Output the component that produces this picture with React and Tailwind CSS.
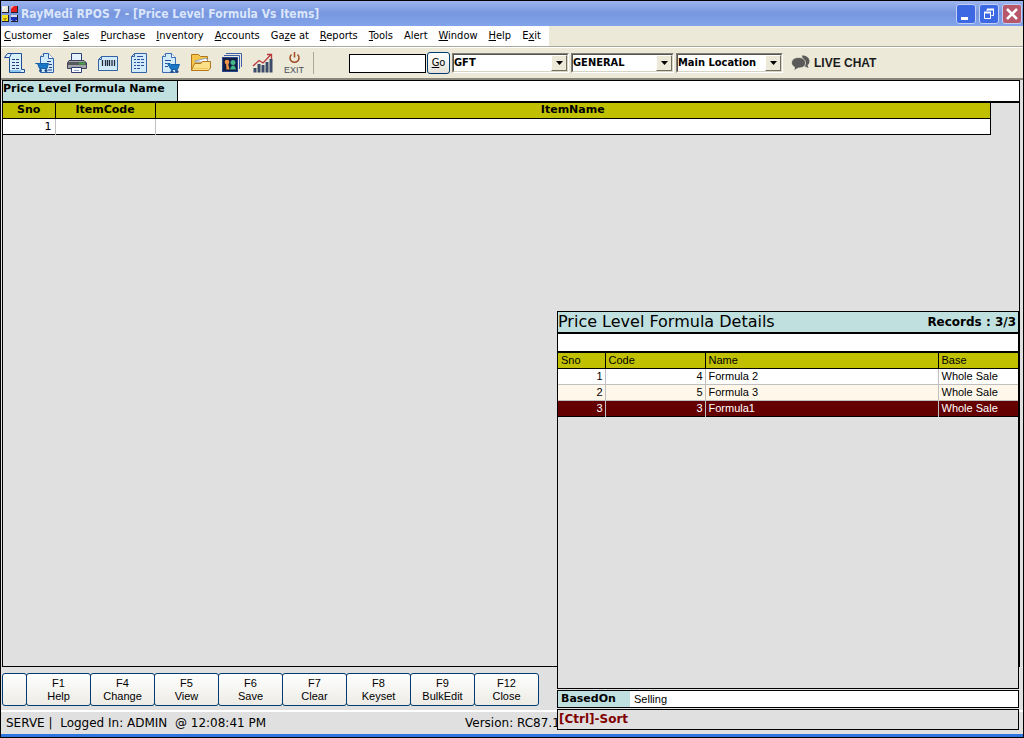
import React, { useState } from 'react';

const menus = [
  ['', 'C', 'ustomer'],
  ['', 'S', 'ales'],
  ['', 'P', 'urchase'],
  ['', 'I', 'nventory'],
  ['', 'A', 'ccounts'],
  ['Ga', 'z', 'e at'],
  ['', 'R', 'eports'],
  ['', 'T', 'ools'],
  ['Alert', '', ''],
  ['', 'W', 'indow'],
  ['', 'H', 'elp'],
  ['E', 'x', 'it'],
];

const keys = [
  ['F1', 'Help'],
  ['F4', 'Change'],
  ['F5', 'View'],
  ['F6', 'Save'],
  ['F7', 'Clear'],
  ['F8', 'Keyset'],
  ['F9', 'BulkEdit'],
  ['F12', 'Close'],
];

const formulas = [
  { code: 4, name: 'Formula 2', base: 'Whole Sale' },
  { code: 5, name: 'Formula 3', base: 'Whole Sale' },
  { code: 3, name: 'Formula1', base: 'Whole Sale' },
];

const Icon = ({ children }) => (
  <svg width="22" height="22" viewBox="0 0 22 22" fill="none" strokeWidth="1">
    {children}
  </svg>
);

const ScrollIcon = () => (
  <Icon>
    <path d="M5.5 5.5V20.5H20.5V17.5H17.5V1.5H3.5L0.5 5.5H5.5" fill="#d8effc" stroke="#1f4a94" />
    <path d="M5.5 5.500L7.500 1.500" stroke="#1f4a94" />
    <path d="M6 18H17V20H6Z" fill="#8cc8f0" />
    <path d="M8 7.5h3M12 7.5h3M8 10.5h3M12 10.5h3M8 13.5h3M12 13.5h3M8 16.5h3M12 16.5h3" stroke="#2b3f7c" />
  </Icon>
);

const CartDocIcon = () => (
  <Icon>
    <path d="M5.5 4.5L8.5 1.5H13.5L18.5 6.5V20.5H5.5Z" fill="#cfeafb" stroke="#2f62ad" />
    <path d="M13.5 1.5V6.5H18.5M8.5 1.5V4.5H5.5" fill="#fff" stroke="#2f62ad" />
    <path d="M12 9.5h4M14 12.5h3M14 15.5h3M13 18h4" stroke="#2b3f7c" />
    <path d="M0.5 11.5H2.5L4.5 16.500H12L13.5 11.5Z" fill="#1877c4" stroke="#1560a8" />
    <circle cx="5.500" cy="18.5" r="1.5" fill="#174a8c" />
    <circle cx="11" cy="18.5" r="1.5" fill="#174a8c" />
  </Icon>
);

const PrinterIcon = () => (
  <Icon>
    <path d="M5.5 8V1.5H15.5V8" fill="#e4f0fb" stroke="#2d3e78" />
    <path d="M3 8.5H18L20.5 11V16.5H1.5V11Z" fill="#a2a4a8" stroke="#3c4058" />
    <path d="M2 11.500h18" stroke="#55585e" strokeWidth="3" />
    <path d="M13 11.500h6" stroke="#43a24a" strokeWidth="2" />
    <path d="M5.5 15.5H15.5V20.5H5.5Z" fill="#fff" stroke="#2d3e78" />
    <path d="M8 18.5h5" stroke="#8ea3c7" />
  </Icon>
);

const BarcodeIcon = () => (
  <Icon>
    <path d="M1.5 7.5L4.5 4.5H20.5V18.5H1.5Z" fill="#d2ebfa" stroke="#3663a5" />
    <path d="M1.5 7.5H4.5V4.5" stroke="#3663a5" />
    <path d="M5.5 8v6M8.5 8v6M10.5 8v6M12.5 8v6M15 8v6M17.5 8v6" stroke="#222a3c" strokeWidth="1.3" />
  </Icon>
);

const ListIcon = () => (
  <Icon>
    <path d="M3.5 4.5L6.5 1.5H18.5V20.5H3.5Z" fill="#d2ebfa" stroke="#3663a5" />
    <path d="M3.5 4.5H6.5V1.5" stroke="#3663a5" />
    <path d="M6 7.5h2M9 7.5h3M13 7.5h3M6 10.5h2M9 10.5h3M13 10.5h3M6 13.5h2M9 13.5h3M13 13.5h3M6 16.5h2M9 16.5h3M9 4.5h6" stroke="#2b4f9c" />
  </Icon>
);

const DocCartIcon = () => (
  <Icon>
    <path d="M3.5 4.5L6.5 1.5H12.5L16.5 5.5V20.5H3.5Z" fill="#d2ebfa" stroke="#3a6bb5" />
    <path d="M12.5 1.5V5.5H16.5M3.5 4.5H6.5V1.5" fill="#fff" stroke="#3a6bb5" />
    <path d="M6 8.5h6M6 11.5h2M6 14.5h3" stroke="#2b4f9c" />
    <path d="M8.5 11.500H11L12 12.500H20.5L18.500 17.5H12Z" fill="#1877c4" stroke="#1560a8" />
    <circle cx="13" cy="19.5" r="1.5" fill="#174a8c" />
    <circle cx="18" cy="19.5" r="1.5" fill="#174a8c" />
  </Icon>
);

const FolderIcon = () => (
  <Icon>
    <path d="M1.5 18.5V2.5H8.5L10.5 4.5H17.5V9" fill="#f6c64c" stroke="#b3771a" />
    <path d="M5 9L16.500 6L18 10H5Z" fill="#fff" stroke="#8d9cb5" />
    <path d="M1.5 18.5L4.5 11.5H11L12.5 9.500H20.5V16L18.5 18.5Z" fill="#fbe08a" stroke="#b3771a" />
    <path d="M4 16.5h14" stroke="#f3c659" />
  </Icon>
);

const UsersIcon = () => (
  <Icon>
    <path d="M5 1.5H20.5V15" stroke="#3c5fa8" />
    <path d="M3 3.5H18.5V17" stroke="#3c5fa8" />
    <rect x="1.5" y="5.5" width="15" height="14" fill="#131c44" stroke="#27468e" />
    <circle cx="6" cy="10" r="2.3" fill="#f0954a" />
    <path d="M5 11H7L8.500 17.500H5.500Z" fill="#f0954a" />
    <circle cx="12" cy="10.500" r="2.500" fill="#43b789" />
    <path d="M9 17.5C9.500 15 10.5 14 12 13.500S14.500 15 15 17.5Z" fill="#43b789" />
  </Icon>
);

const ChartIcon = () => (
  <Icon>
    <path d="M3 20.5V16M7 20.5V12M11 20.5V13M15 20.5V10M19 20.5V7" stroke="#3b4c6b" strokeWidth="3" />
    <path d="M1 14L7 8.5L11 11L19 2.5M15 2.5H19.5V7" stroke="#b8393b" strokeWidth="1.3" />
  </Icon>
);

const ExitIcon = () => (
  <svg width="22" height="22" viewBox="0 0 22 22" fill="none">
    <path d="M8.500 2.500A4.500 4.500 0 1 0 14.500 2.500" stroke="#a04a22" strokeWidth="1.500" />
    <path d="M11.500 0V5.500" stroke="#a04a22" strokeWidth="1.500" />
    <text x="1" y="21" fontSize="9" fill="#4a4f58" fontFamily="Liberation Sans, sans-serif">
      EXIT
    </text>
  </svg>
);

const tools = [
  ['Bill', ScrollIcon],
  ['Sales', CartDocIcon],
  ['Print', PrinterIcon],
  ['Barcode', BarcodeIcon],
  ['List', ListIcon],
  ['Purchase', DocCartIcon],
  ['Open', FolderIcon],
  ['Users', UsersIcon],
  ['Chart', ChartIcon],
  ['Exit', ExitIcon],
];

const Logo = () => (
  <svg width="17" height="17" viewBox="0 0 17 17">
    <path d="M1 1h7v7H1ZM10 1h7v7h-7ZM1 10h7v7H1ZM10 10h7v7h-7Z" fill="#22202c" />
    <path d="M1 1h6v6H1Z" fill="#e9e6da" />
    <path d="M2 5L5 2H2Z" fill="#fff" />
    <path d="M10 1h6v6h-6Z" fill="#e22020" />
    <path d="M10 4l3-3h-3Z" fill="#f6a6a0" />
    <path d="M1 10h6v6H1Z" fill="#f2e020" />
    <path d="M2 13h4l-2 3Z" fill="#a88a00" />
    <path d="M10 10h6v6h-6Z" fill="#dcdcdc" />
    <path d="M10 12h6v3l-2 1h-2l-2-1Z" fill="#1a34b4" />
  </svg>
);

const WindowButton = ({ label, className, children }) => (
  <button aria-label={label} className={`flex h-5 w-5 items-center justify-center rounded-[3px] border border-[#c3d0f5] ${className}`}>
    <svg width="18" height="18" viewBox="0 0 18 18" fill="none" stroke="#fff">
      {children}
    </svg>
  </button>
);

const Combo = ({ label, value, className }) => (
  <div className={`relative h-5 border border-white border-t-[#848278] border-l-[#848278] bg-white ${className}`}>
    <select
      aria-label={label}
      className="h-full w-full appearance-none border border-[#d8d4c4] border-t-[#55534b] border-l-[#55534b] bg-white font-['DejaVu_Sans_Condensed','DejaVu_Sans',sans-serif] text-[11px] leading-4 font-bold outline-none"
    >
      <option>{value}</option>
    </select>
    <span className="pointer-events-none absolute top-px right-px bottom-px flex w-4 items-center justify-center border border-white border-r-[#716f64] border-b-[#716f64] bg-[#ece9d8]">
      <svg width="7" height="4" viewBox="0 0 7 4">
        <path d="M0 0H7L3.5 4Z" fill="#000" />
      </svg>
    </span>
  </div>
);

const FormulaDetails = () => {
  const [selected, setSelected] = useState(2);
  const [search, setSearch] = useState('');

  return (
    <section className="absolute top-[310px] right-1 bottom-[7px] flex w-[462px] flex-col font-['Liberation_Sans',sans-serif] text-[11px]">
      <div className="flex flex-1 flex-col border border-black bg-[#e0e0e0]">
        <div className="flex h-[22px] items-center justify-between border-b-2 border-black bg-[#c0e0df] pr-0.5 font-['DejaVu_Sans',sans-serif]">
          <h2 className="text-[16px] leading-5">Price Level Formula Details</h2>
          <span className="text-[12px] leading-5 font-bold">Records : 3/3</span>
        </div>
        <input
          aria-label="Search formula"
          value={search}
          onChange={(e) => setSearch(e.target.value)}
          className="h-[19px] border-b-2 border-black bg-white px-1 outline-none"
        />
        <table className="w-full table-fixed border-collapse leading-[15px]">
          <colgroup>
            <col className="w-[47px]" />
            <col className="w-[100px]" />
            <col />
            <col className="w-[80px]" />
          </colgroup>
          <thead>
            <tr className="h-[15px] border-b border-black bg-[#c0c000] text-left leading-[14px]">
              <th className="border-r border-black px-[3px] py-0 font-normal">Sno</th>
              <th className="border-r border-black px-[3px] py-0 font-normal">Code</th>
              <th className="border-r border-black px-[3px] py-0 font-normal">Name</th>
              <th className="px-[3px] py-0 font-normal">Base</th>
            </tr>
          </thead>
          <tbody>
            {formulas.map((item, i) => (
              <tr
                key={item.code}
                onClick={() => setSelected(i)}
                className={`h-4 border-b ${i === formulas.length - 1 ? 'border-black' : 'border-[#c0c0c0]'} ${
                  i === selected ? 'bg-[#640000] text-white' : i % 2 ? 'bg-[#fff8ea]' : 'bg-white'
                }`}
              >
                <td className="border-r border-r-[#c0c0c0] px-0.5 py-0 text-right">{i + 1}</td>
                <td className="border-r border-r-[#c0c0c0] px-0.5 py-0 text-right">{item.code}</td>
                <td className="border-r border-r-[#c0c0c0] px-[3px] py-0">{item.name}</td>
                <td className="px-[3px] py-0">{item.base}</td>
              </tr>
            ))}
          </tbody>
        </table>
      </div>
      <div className="bg-[#e0e0e0] py-px">
        <dl className="flex h-[18px] items-stretch border border-black bg-white leading-4">
          <dt className="w-[72px] bg-[#c0e0df] pl-[3px] font-['DejaVu_Sans',sans-serif] font-bold">BasedOn</dt>
          <dd className="pl-1">Selling</dd>
        </dl>
      </div>
      <div className="h-[21px] border border-black bg-[#e0e0e0] pl-px font-['DejaVu_Sans',sans-serif] text-[12px] leading-[18px] font-bold text-[#800000]">
        [Ctrl]-Sort
      </div>
    </section>
  );
};

const App = () => {
  return (
    <div className="relative flex h-screen flex-col border border-black bg-[#e0e0e0] font-['DejaVu_Sans',sans-serif] text-[11px] text-black">
      <header className="flex h-[25px] shrink-0 items-center gap-[3px] bg-linear-to-b from-[#9db5f0] via-[#7796de] to-[#82a4ea] pr-px">
        <Logo />
        <h1 className="flex-1 font-['DejaVu_Sans_Condensed','DejaVu_Sans',sans-serif] text-[12px] font-bold text-[#dbe6fb]">
          RayMedi RPOS 7 - [Price Level Formula Vs Items]
        </h1>
        <div className="flex gap-[3px]">
          <WindowButton label="Minimize" className="bg-[#3d68e4]">
            <path d="M4 13.5h7" strokeWidth="3" />
          </WindowButton>
          <WindowButton label="Restore" className="bg-[#3d68e4]">
            <path d="M7 6V4.5H13.5V10.5H11.5M4.5 7.5H10.5V13.5H4.5Z" />
            <path d="M4 7.5H11M7 4.5h7" strokeWidth="2" />
          </WindowButton>
          <WindowButton label="Close" className="bg-[#b7586a]">
            <path d="M4 4L14 14M14 4L4 14" strokeWidth="2.500" />
          </WindowButton>
        </div>
      </header>

      <nav className="flex h-[21px] shrink-0 border-b border-[#aca899] bg-[#ece9d8]">
        <div className="flex items-center gap-[11px] bg-white pr-2 pl-[3px] font-['DejaVu_Sans_Condensed','DejaVu_Sans',sans-serif]">
          {menus.map(([before, hot, after]) => (
            <button key={before + hot + after} className="leading-[18px]">
              {before}
              <span className="underline">{hot}</span>
              {after}
            </button>
          ))}
        </div>
      </nav>

      <div className="flex h-[33px] shrink-0 items-center border-t border-b-2 border-t-white border-b-[#8a887c] bg-[#ece9d8]">
        <div className="flex items-center gap-[9px] border-r border-[#aca899] pr-2 pl-[3px]">
          {tools.map(([label, Glyph]) => (
            <button key={label} aria-label={label} className="h-[22px] w-[22px]">
              <Glyph />
            </button>
          ))}
        </div>
        <div className="flex items-center gap-0.5 pl-[35px]">
          <div className="flex items-center gap-px">
            <input aria-label="Search" className="h-[19px] w-[77px] border border-black bg-white px-1 outline-none" />
            <button className="h-[22px] w-[23px] rounded-[3px] border border-[#003c74] bg-linear-to-b from-white to-[#e4e2d8] font-['DejaVu_Sans_Condensed','DejaVu_Sans',sans-serif]">
              <span className="underline">G</span>o
            </button>
          </div>
          <Combo label="Company" value="GFT" className="w-[117px]" />
          <Combo label="Division" value="GENERAL" className="w-[103px]" />
          <Combo label="Location" value="Main Location" className="w-[107px]" />
          <a href="#chat" className="flex items-center gap-1 pl-1.5 font-['Liberation_Sans',sans-serif] text-[12px] font-bold text-[#1c1c1c]">
            <svg width="19" height="16" viewBox="0 0 19 16">
              <path d="M11 0.5C15 0.5 18.500 2.500 18.500 6C18.500 8 17.500 9.500 16.500 10L17.500 13L13 11Z" fill="#5a5a58" />
              <path
                d="M7.500 2.500C11.500 2.500 14.500 4.500 14.500 8S11.500 13 7.500 13L3 15.500L3.500 12C1.500 11 0.500 9.500 0.500 8C0.500 4.500 3.500 2.500 7.500 2.500Z"
                fill="#5a5a58"
                stroke="#ece9d8"
                strokeWidth="0.8"
              />
            </svg>
            LIVE CHAT
          </a>
        </div>
      </div>

      <main className="mr-[3px] ml-px flex flex-1 flex-col border border-black bg-[#e0e0e0]">
        <div className="flex h-[22px] border-b-2 border-black bg-white">
          <label htmlFor="formula-name" className="w-[175px] border-r border-black bg-[#c0e0df] leading-4 font-bold whitespace-nowrap">
            Price Level Formula Name
          </label>
          <input id="formula-name" className="flex-1 bg-white px-1 outline-none" />
        </div>
        <div className="pr-7">
          <table className="w-full table-fixed border-collapse leading-[15px]">
            <colgroup>
              <col className="w-[52px]" />
              <col className="w-[100px]" />
              <col />
            </colgroup>
            <thead>
              <tr className="h-[15px] border-r border-b border-black bg-[#c0c000] leading-[14px]">
                <th className="border-r border-black p-0">Sno</th>
                <th className="border-r border-black p-0">ItemCode</th>
                <th className="p-0">ItemName</th>
              </tr>
            </thead>
            <tbody>
              <tr className="h-4 border-r border-b border-black bg-white">
                <td className="border-r border-r-[#c0c0c0] px-[3px] py-0 text-right">1</td>
                <td className="border-r border-r-[#c0c0c0] p-0" />
                <td className="p-0" />
              </tr>
            </tbody>
          </table>
        </div>
      </main>

      <footer className="shrink-0">
        <div className="ml-px flex pt-1.5 pb-1 font-['Liberation_Sans',sans-serif] text-[11px] leading-[13px]">
          <button aria-label="Blank" className="h-[33px] w-[25px] rounded-[3px] border border-[#003c74] bg-linear-to-b from-white to-[#ecebe5]" />
          {keys.map(([key, label]) => (
            <button key={key} className="-ml-px h-[33px] w-[65px] rounded-[3px] border border-[#003c74] bg-linear-to-b from-white to-[#ecebe5]">
              {key}
              <br />
              {label}
            </button>
          ))}
        </div>
        <div className="flex h-[27px] items-center border-t-2 border-b-3 border-t-white border-b-[#2f75e0] pl-[5px] text-[12px] whitespace-pre">
          <span className="w-[459px]">{'SERVE |  Logged In: ADMIN  @ 12:08:41 PM'}</span>
          <span>Version: RC87.1</span>
        </div>
      </footer>

      <FormulaDetails />
    </div>
  );
};

export default App;
